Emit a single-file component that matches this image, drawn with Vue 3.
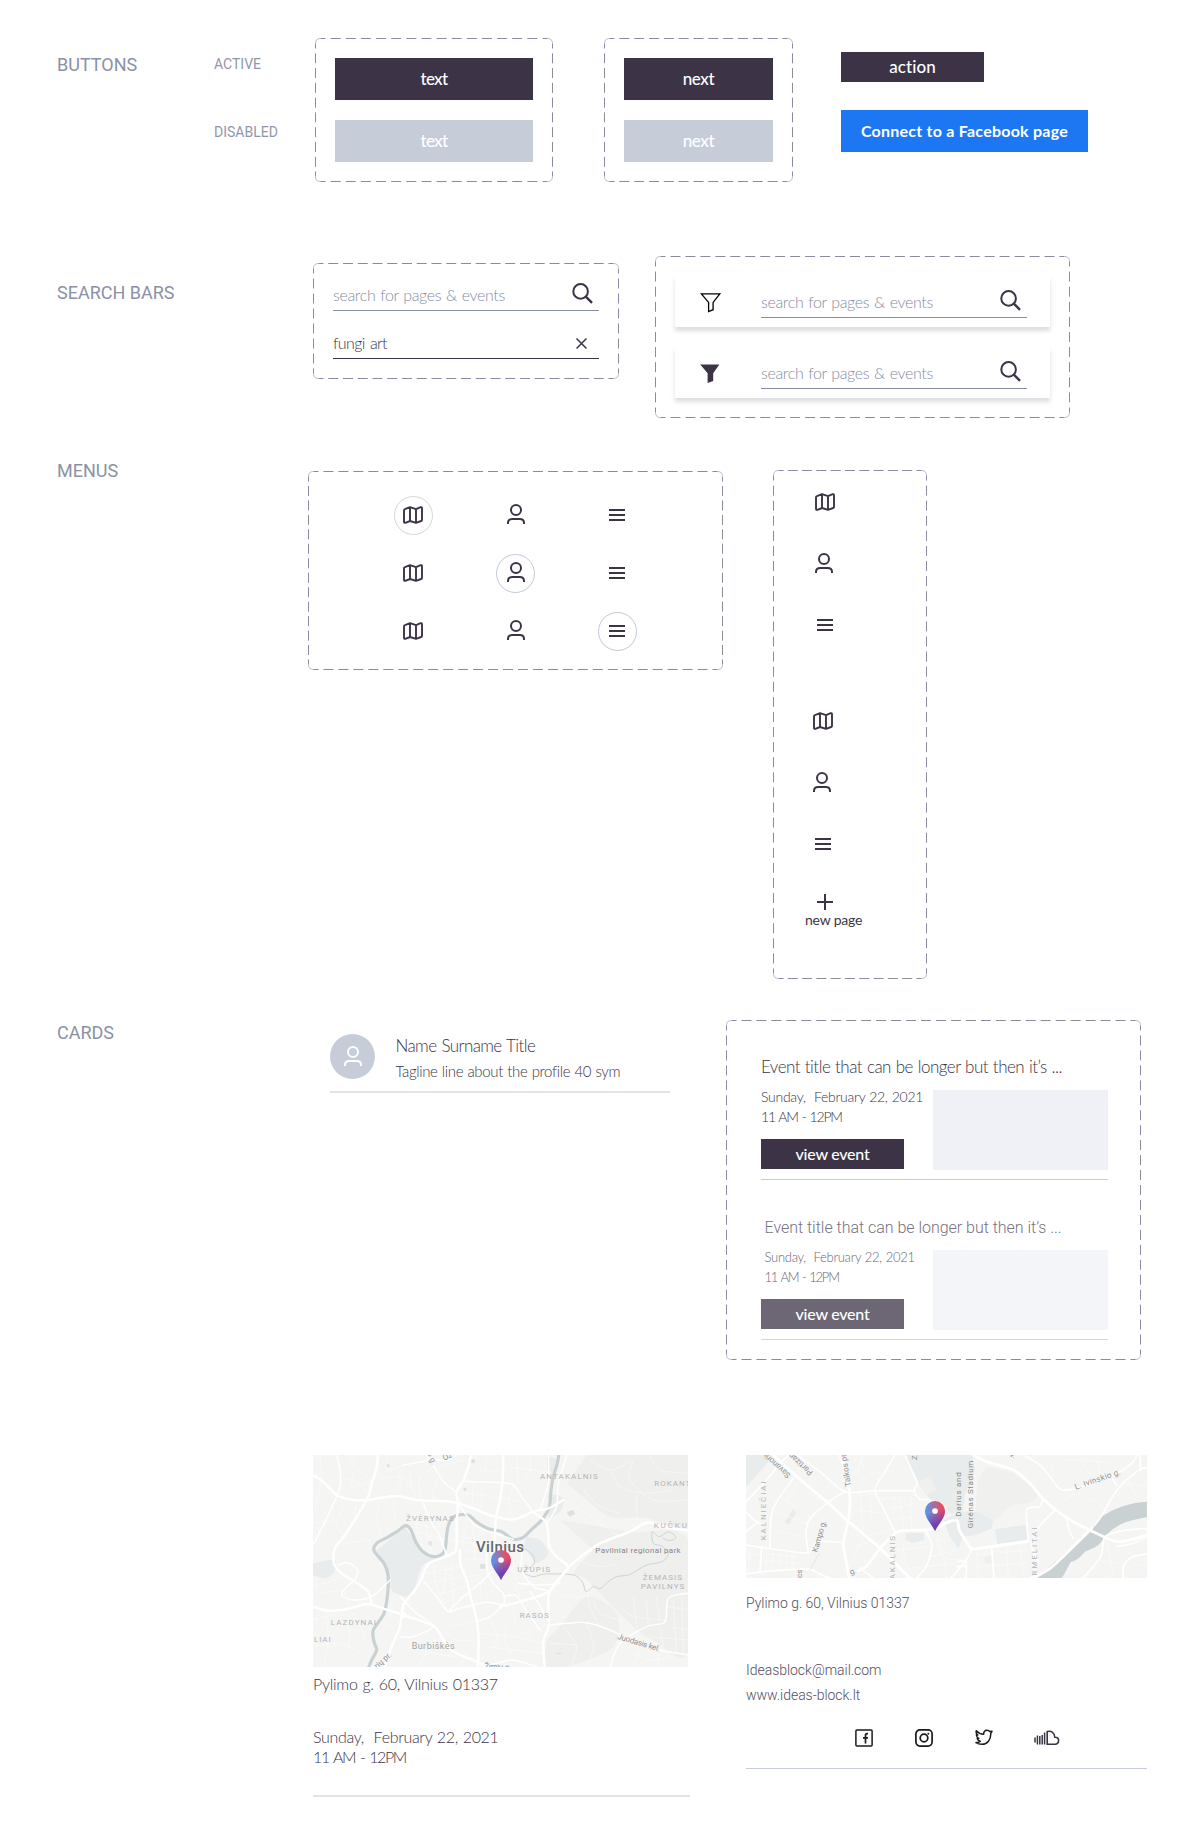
<script setup>
// Outline of a component group: rounded corners, with a half dash at both ends of every side.
function dashed(w, h, r = 5) {
  const x0 = 0.5, y0 = 0.5, x1 = w - 0.5, y1 = h - 0.5
  const side = (ax, ay, bx, by) => {
    const len = Math.hypot(bx - ax, by - ay)
    const n = Math.round(len / 15)
    const step = len / n
    const ux = (bx - ax) / len, uy = (by - ay) / len
    let d = ''
    for (let i = 0; i <= n; i++) {
      const s = Math.max(0, i * step - 5), e = Math.min(len, i * step + 5)
      d += `M${(ax + ux * s).toFixed(2)} ${(ay + uy * s).toFixed(2)}L${(ax + ux * e).toFixed(2)} ${(ay + uy * e).toFixed(2)}`
    }
    return d
  }
  return side(x0 + r, y0, x1 - r, y0) + side(x1, y0 + r, x1, y1 - r) +
    side(x0 + r, y1, x1 - r, y1) + side(x0, y0 + r, x0, y1 - r)
}
function corners(w, h, r = 5) {
  const x0 = 0.5, y0 = 0.5, x1 = w - 0.5, y1 = h - 0.5
  return `M${x0} ${y0 + r}Q${x0} ${y0} ${x0 + r} ${y0}M${x1 - r} ${y0}Q${x1} ${y0} ${x1} ${y0 + r}` +
    `M${x1} ${y1 - r}Q${x1} ${y1} ${x1 - r} ${y1}M${x0 + r} ${y1}Q${x0} ${y1} ${x0} ${y1 - r}`
}

// Smooth curve through a list of "x,y" points.
function curve(str) {
  const p = str.trim().split(/\s+/).map(s => s.split(',').map(Number))
  let d = `M${p[0]}`
  for (let i = 0; i < p.length - 1; i++) {
    const a = p[i - 1] || p[i], b = p[i], c = p[i + 1], e = p[i + 2] || c
    const k = 7
    d += `C${(b[0] + (c[0] - a[0]) / k).toFixed(1)} ${(b[1] + (c[1] - a[1]) / k).toFixed(1)} ${(c[0] - (e[0] - b[0]) / k).toFixed(1)} ${(c[1] - (e[1] - b[1]) / k).toFixed(1)} ${c}`
  }
  return d
}

const menu = ['i-map', 'i-user', 'i-list']
const offset = { 'i-map': [9, 10], 'i-user': [11, 8], 'i-list': [11, 13] }

const city = {
  parks: [
    '860,45 1164,45 1164,260 1040,235 930,230 860,180 800,130',
    '780,240 990,275 1164,300 1164,640 1060,600 1000,560 860,420 820,400 880,330',
    '780,560 860,470 950,520 940,620 800,681 735,681 740,600',
  ],
  green: [
    '315,262 345,305 370,345 400,358 365,380 340,460 320,470 275,450 268,400 225,335',
    '39,370 105,360 100,400 75,415 39,405',
    '680,290 720,300 745,340 710,370 690,345 670,320',
    '745,160 790,175 780,215 745,235',
    '740,50 770,60 760,100 742,90',
  ],
  river: '777,40 772,70 760,110 753,150 748,200 725,240 695,268 670,292 640,298 605,275 565,266 532,248 505,226 472,226 452,240 442,270 436,325 425,344 400,350 370,336 347,305 332,268 316,257 292,274 262,292 230,310 222,332 252,370 264,405 263,460 252,520 220,570 222,605 230,630 215,660 203,690',
  stream: '668,322 698,345 702,372 672,396 700,410 735,402 820,405 848,428 858,455 880,440 900,446 925,425 950,410 985,405 1010,392 1040,375 1088,364 1105,340 1085,318 1060,310 1056,275 1078,290 1105,275 1128,292 1110,302 1090,295',
  major: [
    '39,105 75,130 110,165 160,180 200,180 290,168 350,180 440,184 474,190 520,205 570,226 640,238 700,215 745,205 790,180',
    '514,40 505,80 490,122 470,155 474,190 470,250 468,330 440,348 385,372 365,415 345,450 310,495 300,560 275,620 252,690',
    '234,40 230,85 215,130 200,180 135,285 105,325 102,370 125,400 180,435 205,455 215,490',
    '39,500 85,512 140,508 200,492 250,506 310,525 400,558 430,600 460,635 530,665 560,685',
    '1170,272 1100,262 1040,248 990,275 900,310 850,345 805,382 745,455 660,485 600,500',
    '610,40 608,120 600,180 588,235 582,330',
    '480,330 482,375 500,420 512,470 530,540 536,600 534,690',
    '700,217 740,250 748,320 775,355 805,382 765,430 745,470 747,555 730,605 735,690',
  ],
  medium: [
    '380,45 405,85 435,130 470,155', '490,124 560,126 635,132 665,170 700,217',
    '110,45 120,90 120,140 90,215 39,315', '310,75 360,66 400,58 440,62 470,45',
    '372,425 410,470 445,515 480,505 560,487 620,498', '445,515 490,470 545,425 575,395',
    '560,340 562,390 580,430 610,462 612,490 600,500', '612,468 650,468 680,515 720,570',
    '690,455 715,490 748,550', '748,555 800,550 860,548 930,570 1040,622 1164,645',
    '530,668 580,672 640,660 735,690', '1164,460 1105,475 1095,545 1040,560 960,610 930,681',
    '740,250 770,200 775,130 800,45', '582,330 660,330 665,390 700,440 740,450',
    '530,545 570,530 605,500', '115,375 145,368 172,390 165,420 140,440 125,465 160,480 215,470 270,420',
    '745,45 745,130 720,210', '440,348 420,290 390,240 370,190', '474,190 510,240 540,265 640,298', '300,470 350,520 400,558 340,590 300,590',
    '655,430 720,435 780,430',
  ],
  minor: [
    '150,45 165,80 190,100 215,125', '39,60 70,45', '120,110 170,130 205,160', '60,45 65,120 45,200', '160,100 155,140 200,130 240,100',
    '240,120 290,110 330,130 350,180', '260,45 265,90 310,75', '300,90 300,165', '330,95 335,140', '400,85 360,110 360,180', '420,110 400,150 400,180',
    '520,130 515,205', '545,128 545,215', '640,135 625,190 640,235', '530,90 600,95', '620,80 700,90 745,95', '650,45 655,130', '690,45 690,90 670,130',
    '500,160 590,170 660,185', '560,45 555,90', '490,60 430,75', '280,180 285,240', '240,180 230,240 250,290', '170,190 165,250 205,300',
    '330,270 440,300', '350,250 390,260 440,258', '345,225 350,260 372,330', '375,250 395,345', '415,245 420,300', '385,300 440,298 560,320', '390,300 395,270',
    '500,240 495,330 580,330', '520,255 525,370', '545,270 545,340', '475,290 560,300', '480,355 570,360', '400,372 410,440 445,515', '420,370 470,440',
    '380,400 480,380', '370,430 500,410 570,400', '390,470 500,440', '420,490 510,465', '455,370 460,500', '500,420 600,440', '540,430 545,485', '440,380 430,460',
    '600,400 640,430 660,470', '610,350 640,400', '640,360 650,440', '580,440 550,485', '620,540 615,600 640,650', '570,530 590,600 560,660', '640,500 650,560 700,590',
    '540,580 640,590 730,610', '560,620 730,640', '450,560 530,540', '400,600 450,625', '420,560 470,600 530,600', '330,620 400,640 470,650', '350,681 380,640', '480,681 500,640',
    '60,460 130,455 150,510', '39,540 110,520', '75,512 85,600 70,681', '120,510 150,580 140,640', '39,620 120,610 180,640', '160,520 200,600', '280,560 220,540',
    '39,440 90,425 125,410', '150,400 160,380', '100,300 140,310 200,300', '39,250 100,240', '130,290 110,250 130,200',
    '930,90 960,140 1030,160 1120,150', '1000,60 990,120 1060,180 1164,180', '870,60 930,90 1000,60', '850,150 900,200 960,220', '1050,45 1080,90 1164,100', '830,200 900,250 960,290', '1010,170 1010,240',
    '830,360 900,380 950,370', '880,480 900,520 960,540', '860,420 870,500 900,560', '770,470 860,470', '790,560 830,620 810,681', '860,550 880,620 860,681', '750,610 830,615',
    '960,500 1000,530 1095,540', '1000,470 1010,560', '1040,480 1045,560', '1070,470 1080,545', '1100,500 1164,510', '1110,560 1164,570', '1080,560 1090,620', '1120,480 1130,640', '1145,470 1150,640', '1050,590 1164,600', '980,620 1040,660 1110,650', '1020,630 1000,681', '1080,640 1070,681',
  ],
}

const district = {
  green: [
    '48,45 130,45 118,62 85,100 48,140',
    '525,45 728,45 735,90 705,165 698,215 660,222 640,190 600,178 562,125',
    '640,240 690,215 740,215 790,240 785,265 740,285 700,290 685,325 660,290',
    '795,268 888,254 895,300 802,312', '527,280 580,278 582,300 548,310 527,300', '165,245 190,208 198,220 175,255',
  ],
  hill: ['770,80 850,100 920,160 905,185 840,200 790,240 740,215 745,120'],
  blocks: ['565,125 600,108 618,150 590,165', '760,352 790,345 790,365 768,372'],
  river: 'M1251 185 C1200 187 1150 205 1112 232 C1090 255 1065 290 1030 318 C1000 340 985 360 960 378 C945 395 935 405 922 414 L995 414 C1005 400 1012 385 1022 366 C1045 360 1055 345 1065 335 C1090 325 1105 320 1118 300 C1140 270 1165 245 1251 232z',
  major: [
    '125,40 200,110 290,185 350,240 450,325 545,420', '328,40 352,115 360,180 355,240 340,310 350,370 358,420',
    '370,400 410,378 450,325 490,285 515,272 610,268 645,250 680,240 690,275 725,328', '730,45 770,65 850,90 900,130 935,172 980,212 1030,245 1110,285 1160,305 1200,300 1251,285',
    '895,418 960,385 1060,290 1085,265', '725,328 800,318 895,303',
  ],
  medium: [
    '48,185 100,130 160,60 178,45', '200,45 270,95 345,155 440,152 555,152', '495,45 465,95 435,150 465,215 497,280',
    '525,45 545,90 562,130 552,152 570,178 600,180 620,215', '725,328 705,365 660,418', '685,365 708,365 708,414', '1085,265 1110,235 1165,145 1230,88 1251,85',
    '880,45 930,75 960,110 992,148 1040,145 1150,105 1200,75 1222,45', '48,402 120,393 190,388 240,388 275,405 310,418',
    '48,315 95,322 165,332 235,338 262,305 340,308', '235,338 228,280 238,240 290,190 345,155', '95,322 90,395', '120,322 128,210 190,115',
    '585,272 605,310 600,350 585,385 560,414', '785,325 792,414', '937,175 930,200 890,210 895,300', '975,210 940,245 912,280 905,320 925,365',
    '1180,414 1180,380 1205,352 1251,342', '1251,265 1180,272 1125,290 1112,350 1060,414', '48,215 75,243 95,252', '48,275 85,245',
    '1010,235 1018,270 1030,295', '1230,45 1232,90', '1148,118 1160,135', '390,385 430,414', '1160,320 1210,310 1251,290', '710,378 680,380',
  ],
  minor: [
    '48,340 90,345', '60,320 55,400', '130,340 125,390', '150,345 148,390', '170,345 168,388', '100,360 210,370', '95,340 200,350', '190,345 185,388', '110,320 108,395',
    '130,210 200,240 230,250', '150,170 240,230', '200,130 160,200', '128,270 220,290', '260,110 230,150 270,180', '300,130 270,165',
    '370,170 440,160', '375,210 470,220', '390,155 400,280', '420,155 425,230', '450,180 500,175 540,200', '470,210 550,190', '480,240 560,230', '510,160 520,270', '540,160 545,268', '490,155 495,220', '400,290 480,270', '370,260 400,290 370,350',
    '380,320 430,300', '390,60 420,100 460,95', '375,90 435,150', '400,45 380,100', '610,300 660,300', '620,280 640,350 700,360', '640,330 610,350', '640,350 650,414', '680,330 600,350', '590,380 680,370', '500,330 590,320', '520,310 530,380 590,380',
    '740,345 790,340', '800,340 890,330', '830,320 835,414', '870,315 880,400', '740,380 890,370', '740,328 745,414', '960,60 970,110', '1050,60 1080,100', '1100,45 1110,110', '1000,60 1050,60 1150,70', '1000,100 1030,140',
    '1180,130 1251,140', '1190,110 1220,170', '1020,170 1080,230', '1050,160 1120,200', '990,190 1030,160', '1100,360 1180,370', '1130,310 1150,400', '1200,370 1251,380', '1080,380 1140,414', '960,260 1000,300', '940,290 980,330',
  ],
}
</script>

<template>
  <div class="page">
    <svg class="sprite" width="0" height="0" aria-hidden="true">
      <defs>
        <symbol id="i-map" viewBox="0 0 20 18">
          <path fill="none" stroke="currentColor" stroke-width="1.9" stroke-linejoin="round" d="M1 4.4Q1 3.4 1.9 3.1L7 1.2L13 3.1L17.7 1.2Q19 .9 19 2.2V13.7Q19 14.7 18.1 15L13 16.9L7 15L2.3 16.8Q1 17.1 1 15.8zM7 1.2V15M13 3.1V16.9" />
        </symbol>
        <symbol id="i-user" viewBox="0 0 18 20">
          <g fill="none" stroke="currentColor" stroke-width="2"><circle cx="9" cy="6" r="5" /><path d="M1 20V19Q1 15 5.2 15H12.8Q17 15 17 19V20" /></g>
        </symbol>
        <symbol id="i-list" viewBox="0 0 16 12"><path fill="currentColor" d="M0 0H16V2H0zM0 5H16V7H0zM0 10H16V12H0z" /></symbol>
        <symbol id="i-search" viewBox="0 0 21 21">
          <g fill="none" stroke="currentColor" stroke-width="2"><circle cx="8.6" cy="8.4" r="7.3" /><path d="M13.8 13.6L20 19.8" stroke-width="2.4" /></g>
        </symbol>
        <linearGradient id="pin-side" x1="0" y1=".5" x2="1" y2=".3"><stop offset=".12" stop-color="#5b93e8" /><stop offset=".85" stop-color="#f04a5e" /></linearGradient>
        <linearGradient id="pin-down" x1=".35" y1=".2" x2=".55" y2="1"><stop offset=".2" stop-color="#6a3bb5" stop-opacity="0" /><stop offset=".75" stop-color="#6a3bb5" stop-opacity=".9" /></linearGradient>
        <symbol id="pin" viewBox="0 0 60 90">
          <path fill="url(#pin-side)" d="M30 90C20 68 0 52 0 30A30 30 0 0 1 60 30C60 52 40 68 30 90z" />
          <path fill="url(#pin-down)" d="M30 90C20 68 0 52 0 30A30 30 0 0 1 60 30C60 52 40 68 30 90z" />
          <circle cx="30" cy="30" r="8.5" fill="#fff" />
        </symbol>
      </defs>
    </svg>

    <section class="row buttons">
      <h2>BUTTONS</h2>
      <div class="states"><span>ACTIVE</span><span>DISABLED</span></div>
      <div class="group wide">
        <svg class="frame" width="238" height="144"><path :d="dashed(238, 144)" /><path class="soft" :d="corners(238, 144)" /></svg>
        <button class="btn t">text</button>
        <button class="btn t off">text</button>
      </div>
      <div class="group narrow">
        <svg class="frame" width="189" height="144"><path :d="dashed(189, 144)" /><path class="soft" :d="corners(189, 144)" /></svg>
        <button class="btn n">next</button>
        <button class="btn n off">next</button>
      </div>
      <div class="extra">
        <button class="btn small">action</button>
        <button class="btn fb">Connect to a Facebook page</button>
      </div>
    </section>

    <section class="row search">
      <h2>SEARCH BARS</h2>
      <div class="group plain">
        <svg class="frame" width="306" height="116"><path :d="dashed(306, 116)" /><path class="soft" :d="corners(306, 116)" /></svg>
        <div class="field"><span>search for pages &amp; events</span><svg class="lens" width="21" height="21"><use href="#i-search" /></svg></div>
        <div class="field filled">
          <span>fungi art</span>
          <svg class="clear" width="11" height="11" viewBox="0 0 11 11"><path fill="none" stroke="currentColor" stroke-width="1.5" d="M.5 .5L10.5 10.5M10.5 .5L.5 10.5" /></svg>
        </div>
      </div>
      <div class="group cards">
        <svg class="frame" width="415" height="162"><path :d="dashed(415, 162)" /><path class="soft" :d="corners(415, 162)" /></svg>
        <div class="bar">
          <svg class="funnel" width="22" height="20" viewBox="0 0 22 20"><path fill="none" stroke="#000" stroke-width="1.3" stroke-linejoin="miter" d="M1.4 .8H19.8L13.1 9.4V16.7L8.6 18.6V9.4z" /></svg>
          <div class="field"><span>search for pages &amp; events</span><svg class="lens" width="21" height="21"><use href="#i-search" /></svg></div>
        </div>
        <div class="bar">
          <svg class="funnel" width="22" height="20" viewBox="0 0 22 20"><path fill="#3c3446" d="M.2 .6H19.4L13.2 9.2V17L7.6 19V9.2z" /></svg>
          <div class="field"><span>search for pages &amp; events</span><svg class="lens" width="21" height="21"><use href="#i-search" /></svg></div>
        </div>
      </div>
    </section>

    <section class="row menus">
      <h2>MENUS</h2>
      <div class="group tabs">
        <svg class="frame" width="415" height="199"><path :d="dashed(415, 199)" /><path class="soft" :d="corners(415, 199)" /></svg>
        <template v-for="r in 3" :key="r">
          <svg v-for="(id, c) in menu" :key="id" width="39" height="39" viewBox="0 0 39 39">
            <circle v-if="c === r - 1" cx="19.5" cy="19.5" r="19" fill="none" :stroke="c ? '#c0c9d6' : '#d6d6d9'" />
            <g :transform="`translate(${offset[id]})`">
              <use :href="'#' + id" :width="id === 'i-map' ? 20 : id === 'i-user' ? 18 : 16" :height="id === 'i-map' ? 18 : id === 'i-user' ? 20 : 12" />
            </g>
          </svg>
        </template>
      </div>
      <div class="group side">
        <svg class="frame" width="154" height="509"><path :d="dashed(154, 509)" /><path class="soft" :d="corners(154, 509)" /></svg>
        <div v-for="k in 2" :key="k" class="stack">
          <svg width="20" height="18"><use href="#i-map" /></svg>
          <svg width="18" height="20"><use href="#i-user" /></svg>
          <svg class="in" width="16" height="12"><use href="#i-list" /></svg>
        </div>
        <svg class="plus" width="16" height="16" viewBox="0 0 16 16"><path fill="currentColor" d="M7 0H9V7H16V9H9V16H7V9H0V7H7z" /></svg>
        <span class="new">new page</span>
      </div>
    </section>

    <section class="row cardrow">
      <h2>CARDS</h2>
      <div class="profile">
        <div class="avatar"><svg width="18" height="20"><use href="#i-user" /></svg></div>
        <div><p class="name">Name Surname Title</p><p class="tag">Tagline line about the profile 40 sym</p></div>
      </div>
      <div class="group events">
        <svg class="frame" width="415" height="340"><path :d="dashed(415, 340)" /><path class="soft" :d="corners(415, 340)" /></svg>
        <article v-for="k in 2" :key="k" :class="['event', { past: k === 2 }]">
          <h3>Event title that can be longer but then it’s ...</h3>
          <div class="body">
            <div class="when">
              <p class="date">Sunday,&nbsp; February 22, 2021</p>
              <p class="time">11 AM - 12PM</p>
              <button class="btn view">view event</button>
            </div>
            <div class="thumb"></div>
          </div>
        </article>
      </div>
    </section>

    <section class="row maps">
      <div class="place">
        <svg class="map" width="375" height="212" viewBox="39 45 1125 636">
          <rect x="39" y="45" width="1125" height="636" fill="#f5f5f4" />
          <path v-for="p in city.parks" :key="p" :d="curve(p) + 'z'" fill="#efefee" />
          <path v-for="p in city.green" :key="p" :d="curve(p) + 'z'" fill="#e9ecec" />
          <g fill="#dde1e2"><path d="M515 57l10 2v10h-12zM490 145l8-2 2 8-8 2zM257 70l14 6-8 8zM386 302l10 4-2 12-10-4zM770 638h14v4h-14zM800 216l20-6 6 12-18 8zM540 372h16v14h-16z" /></g>
          <g fill="none" stroke="#fff" stroke-linecap="round">
            <path v-for="p in city.minor" :key="p" :d="curve(p)" stroke-width="2" opacity=".65" />
            <path :d="curve(city.stream)" stroke="#cdd4d5" stroke-width="3" />
            <path :d="curve(city.river)" stroke="#c9d1d2" stroke-width="9.5" />
            <path v-for="p in city.medium" :key="p" :d="curve(p)" stroke-width="4.5" />
            <path v-for="p in city.major" :key="p" :d="curve(p)" stroke-width="7.5" />
            <circle cx="474" cy="190" r="6" stroke-width="5" /><circle cx="310" cy="524" r="6" stroke-width="6" />
          </g>
          <g class="area">
            <text x="720" y="118" textLength="173">ANTAKALNIS</text>
            <text x="1063" y="139" textLength="108">ROKANT</text>
            <text x="318" y="243" textLength="143">ŽVĖRYNAS</text>
            <text x="1061" y="263" textLength="120">KUČKUR</text>
            <text x="652" y="396" textLength="98">UŽUPIS</text>
            <text x="1028" y="419" textLength="118">ŽEMASIS</text>
            <text x="1022" y="448" textLength="131">PAVILNYS</text>
            <text x="659" y="533" textLength="87">RASOS</text>
            <text x="92" y="556" textLength="136">LAZDYNAI</text>
            <text x="42" y="607" textLength="50">LIAI</text>
          </g>
          <text class="town" x="335" y="626" textLength="129">Burbiškės</text>
          <text class="road dark" x="886" y="338" textLength="256">Pavilniai regional park</text>
          <text class="capital" x="528" y="336" textLength="144">Vilnius</text>
          <g class="road">
            <text transform="translate(951 596) rotate(17)" textLength="132">Juodasis kel.</text>
            <text transform="translate(232 687) rotate(-42)" textLength="60">rių pr.</text>
            <text transform="translate(553 687) rotate(2)" textLength="80">Žirnių g.</text>
            <text transform="translate(382 40) rotate(68)">s g.</text>
            <text transform="translate(432 62) rotate(-22)">Oz</text>
          </g>
          <use href="#pin" x="573" y="330" width="60" height="90" />
        </svg>
        <p class="addr">Pylimo g. 60, Vilnius 01337</p>
        <p class="date">Sunday,&nbsp; February 22, 2021</p>
        <p class="time">11 AM - 12PM</p>
      </div>

      <div class="contact">
        <svg class="map" width="401" height="123" viewBox="48 45 1203 369">
          <rect x="48" y="45" width="1203" height="369" fill="#f5f5f4" />
          <path v-for="p in district.hill" :key="p" :d="curve(p) + 'z'" fill="#f0f0ef" />
          <path v-for="p in district.green" :key="p" :d="'M' + p + 'z'" fill="#e9ecec" />
          <path v-for="p in district.blocks" :key="p" :d="'M' + p + 'z'" fill="#f0f0ef" />
          <path :d="district.river" fill="#c9d1d2" />
          <g fill="none" stroke="#fff" stroke-linecap="round">
            <path v-for="p in district.minor" :key="p" :d="curve(p)" stroke-width="2" opacity=".65" />
            <path v-for="p in district.medium" :key="p" :d="curve(p)" stroke-width="5" />
            <path v-for="p in district.major" :key="p" :d="curve(p)" stroke-width="8.5" />
            <path d="M240 388L268 340" stroke="#dcdedd" stroke-width="2" />
          </g>
          <g class="area">
            <text transform="translate(109 301) rotate(-90)" textLength="177">KALNIEČIAI</text>
            <text transform="translate(496 418) rotate(-90)" textLength="130">AKALNIS</text>
            <text transform="translate(920 407) rotate(-90)" textLength="145">RMELITAI</text>
          </g>
          <g class="road">
            <text transform="translate(183 104) rotate(222)">Savanorių</text>
            <text transform="translate(250 96) rotate(222)">Partizanų</text>
            <text transform="translate(363 138) rotate(-99)">Taikos pr.</text>
            <text transform="translate(262 338) rotate(-74)" textLength="97">Kampo g.</text>
            <text transform="translate(216 414) rotate(-90)">cs</text>
            <text transform="translate(362 404) rotate(-20)">g.</text>
            <text transform="translate(562 60) rotate(-90)">Z</text>
            <text transform="translate(838 48) rotate(30)">v.</text>
            <text transform="translate(1037 149) rotate(-19)" textLength="144">L. Ivinskio g.</text>
          </g>
          <g class="road dark">
            <text transform="translate(693 230) rotate(-90)" textLength="133">Darius and</text>
            <text transform="translate(728 265) rotate(-90)" textLength="203">Girėnas Stadium</text>
          </g>
          <use href="#pin" x="585" y="183" width="60" height="90" />
        </svg>
        <p class="addr">Pylimo g. 60, Vilnius 01337</p>
        <p class="mail">Ideasblock@mail.com</p>
        <p class="site">www.ideas-block.lt</p>
        <div class="social">
          <svg width="18" height="18" viewBox="0 0 18 18"><rect x=".9" y=".9" width="16.2" height="16.2" rx="1" fill="none" stroke="#1b1b1b" stroke-width="1.5" /><path fill="none" stroke="#1b1b1b" stroke-width="1.7" d="M13 4.7H12.2Q10.5 4.7 10.5 6.5V14.4M8 8.8H13" /></svg>
          <svg width="18" height="18" viewBox="0 0 18 18"><g fill="none" stroke="#1b1b1b" stroke-width="1.7"><rect x=".9" y=".9" width="16.2" height="16.2" rx="4" /><circle cx="9" cy="9" r="3.8" /></g><circle cx="13.3" cy="4.8" r="1" fill="#1b1b1b" /></svg>
          <svg width="18" height="18" viewBox="0 0 18 18"><path fill="none" stroke="#1b1b1b" stroke-width="1.5" stroke-linejoin="round" d="M1.3 1.8C3.2 4 5.6 5.2 8.7 5.3C8.5 2.8 10.1 1.3 12 1.3C13.2 1.3 14 1.8 14.7 2.6L17 2.3L15.7 4.7C16 10.6 12.4 15.3 7 15.3C4.6 15.3 2.6 14.7 1 13.6C2.8 13.6 4.2 13.2 5.3 12.2C3.6 11.8 2.6 10.9 2.2 9.5H3.8C2.1 8.6 1.3 7.3 1.4 5.7L2.8 6C1.3 4.8 .8 3.4 1.3 1.8z" /></svg>
          <svg class="cloud" width="26" height="16" viewBox="0 0 26 16"><path fill="none" stroke="#3c3446" stroke-width="1.5" d="M1 7.5V12.5M3.4 5.5V14.6M5.8 6V14.6M8.2 5V14.6M10.6 2.5V14.6" /><path fill="none" stroke="#3c3446" stroke-width="1.6" d="M13.2 14.2V1.6C17.4 .2 20.6 3 20.8 7.2C23.4 7 24.6 8.8 24.6 10.6C24.6 12.8 23.2 14.2 21 14.2z" /></svg>
        </div>
      </div>
    </section>
  </div>
</template>

<style>
body { background: #fff; }
</style>

<style scoped>
.page { width: 1188px; height: 1843px; overflow: hidden; background: #fff; color: #3c3446; font-family: Lato, "Open Sans", sans-serif; }
.sprite { position: absolute; }
svg { display: block; flex: none; }
h2, h3, p { margin: 0; font-weight: 400; line-height: 20px; white-space: nowrap; }
.row { display: flex; align-items: flex-start; box-sizing: border-box; padding-left: 57px; }
h2 { flex: none; font: 400 18px/20px Roboto, sans-serif; color: #8a91a6; }
.group { position: relative; flex: none; box-sizing: border-box; display: flex; flex-direction: column; }
.frame { position: absolute; left: 0; top: 0; fill: none; stroke: #868da3; stroke-width: 1; }
.soft { opacity: .55; }
.btn { display: block; border: 0; padding: 0; height: 42px; background: #3c3446; color: #fff; font: 500 17px/42px Lato, sans-serif; text-align: center; }
.btn.off { background: #c6cdd9; }
.btn.t { letter-spacing: -.7px; }
.btn.n { letter-spacing: -.4px; }

.buttons { height: 240px; }
.buttons h2 { width: 157px; margin-top: 54.5px; }
.states { width: 101px; margin-top: 54px; display: flex; flex-direction: column; gap: 48px; font: 400 14px/20px Roboto, sans-serif; color: #9197ab; }
.wide, .narrow { margin-top: 38px; padding: 20px; gap: 20px; height: 144px; }
.wide { width: 238px; }
.narrow { width: 189px; margin-left: 51px; }
.extra { margin: 52px 0 0 48px; display: flex; flex-direction: column; gap: 28px; }
.btn.small { width: 143px; height: 30px; line-height: 30px; letter-spacing: .1px; }
.btn.fb { width: 247px; background: #1d77f2; font-weight: 700; font-size: 16px; letter-spacing: .24px; }

.search { height: 220px; }
.search h2 { width: 256px; margin-top: 43px; }
.plain { width: 306px; height: 116px; margin-top: 23px; padding: 20px; gap: 20px; }
.field { flex: none; display: flex; justify-content: space-between; align-items: flex-start; box-sizing: border-box; width: 266px; height: 28px; border-bottom: 1px solid #868da3; }
.field span { padding-top: 2px; font-size: 16px; line-height: 20px; font-weight: 300; letter-spacing: -.35px; word-spacing: .8px; color: #868da3; }
.field.filled { border-color: #3c3446; }
.field.filled span { color: #3c3446; letter-spacing: -.6px; word-spacing: 1.4px; }
.lens { margin-right: 6px; }
.clear { margin: 7px 12px 0 0; }
.cards { width: 415px; height: 162px; margin: 16px 0 0 36px; padding: 20px; gap: 20px; }
.bar { display: flex; box-sizing: border-box; height: 51px; padding: 14px 23px 0 25px; justify-content: space-between; background: #fff; box-shadow: 0 4px 4px rgba(60, 52, 70, .17); }
.funnel { margin-top: 2.5px; }

.menus { height: 550px; }
.menus h2 { width: 251px; margin-top: .5px; }
.tabs { display: grid; grid-template-columns: repeat(3, 39px); gap: 19px 63px; align-content: start; width: 415px; height: 199px; margin-top: 11px; padding: 25px 0 0 86px; }
.side { width: 154px; height: 509px; margin: 10px 0 0 50px; padding: 23px 0 0 40px; }
.stack { display: flex; flex-direction: column; gap: 42px; padding-left: 2px; margin-bottom: 81px; }
.stack + .stack { padding-left: 0; margin-bottom: 44px; }
.stack .in { margin: 4px 0 0 2px; }
.plus { margin-left: 4px; }
.new { margin: -.5px 0 0 -8px; font-size: 14px; line-height: 20px; letter-spacing: -.2px; }

.cardrow { height: 430px; }
.cardrow h2 { width: 273px; margin-top: 13px; }
.profile { display: flex; box-sizing: border-box; width: 340px; height: 59px; margin-top: 24px; gap: 20.5px; border-bottom: 2px solid #e0e5ea; font-weight: 300; }
.avatar { display: flex; justify-content: center; box-sizing: border-box; width: 45px; height: 45px; padding-top: 12px; border-radius: 50%; background: #c6cdd9; color: #fff; }
.profile p { font-weight: 300; }
.name { margin-top: 2px; font-size: 17px; letter-spacing: -.6px; word-spacing: 1px; }
.tag { margin-top: 5px; font-size: 15px; letter-spacing: -.36px; word-spacing: .6px; }
.events { width: 415px; height: 340px; margin: 10px 0 0 56px; padding: 36.5px 0 0 35px; }
.event { flex: none; box-sizing: border-box; width: 347px; height: 123.5px; margin-bottom: 36.5px; border-bottom: 1px solid #c5cdd6; }
.event h3 { font-size: 17px; font-weight: 300; letter-spacing: -.52px; word-spacing: .7px; }
.body { display: flex; justify-content: space-between; margin-top: 10.5px; }
.when p { font-size: 14px; font-weight: 300; }
.when .date { letter-spacing: -.28px; word-spacing: .6px; }
.when .time { letter-spacing: -1.2px; word-spacing: 1.3px; }
.view { width: 143px; height: 30px; margin-top: 12px; font-size: 16px; line-height: 30px; letter-spacing: -.25px; }
.thumb { width: 175px; height: 80px; margin-top: 3px; background: #f0f1f6; }
.past { border-color: #d2d8e1; }
.past h3 { padding: 1px 0 0 3.5px; margin-bottom: -1px; font: 300 16px/20px Roboto, sans-serif; letter-spacing: -.02px; word-spacing: 0; color: #77727f; }
.past .when p { padding-left: 3.5px; font-size: 13px; color: #6c6675; }
.past .view { background: #6c6675; }
.past .thumb { background: #f4f5f9; }

.maps { height: 403px; padding-left: 313px; }
.place { box-sizing: border-box; width: 377px; height: 342px; margin-top: 15px; border-bottom: 2px solid #e1e4ea; }
.place p { font-size: 16px; font-weight: 300; }
.place .addr { margin-top: 6.5px; letter-spacing: -.27px; word-spacing: .8px; }
.place .date { margin-top: 33.5px; letter-spacing: -.33px; word-spacing: .8px; }
.place .time { letter-spacing: -1.4px; word-spacing: 1.8px; }
.contact { box-sizing: border-box; width: 401px; height: 314px; margin: 15px 0 0 56px; border-bottom: 1px solid #c8cdda; }
.contact p { font: 300 14px/20px Roboto, sans-serif; letter-spacing: -.03px; color: #554e5e; }
.contact .addr { margin-top: 15px; }
.contact .mail { margin-top: 47px; }
.contact .site { margin-top: 5px; }
.social { display: flex; align-items: flex-start; gap: 42px; margin: 24px 0 0 109px; }
.cloud { margin: 1px 0 0 -1px; }

.map { overflow: hidden; }
.map text { font-family: Roboto, sans-serif; }
.area { font-size: 24px; fill: #b3b5b6; }
.town { font-size: 27px; fill: #a2a4a5; }
.road { font-size: 24px; fill: #8f9192; }
.road.dark, .dark { fill: #85878a; }
.map .capital { font-size: 45px; font-weight: 500; fill: #66686b; }
</style>
